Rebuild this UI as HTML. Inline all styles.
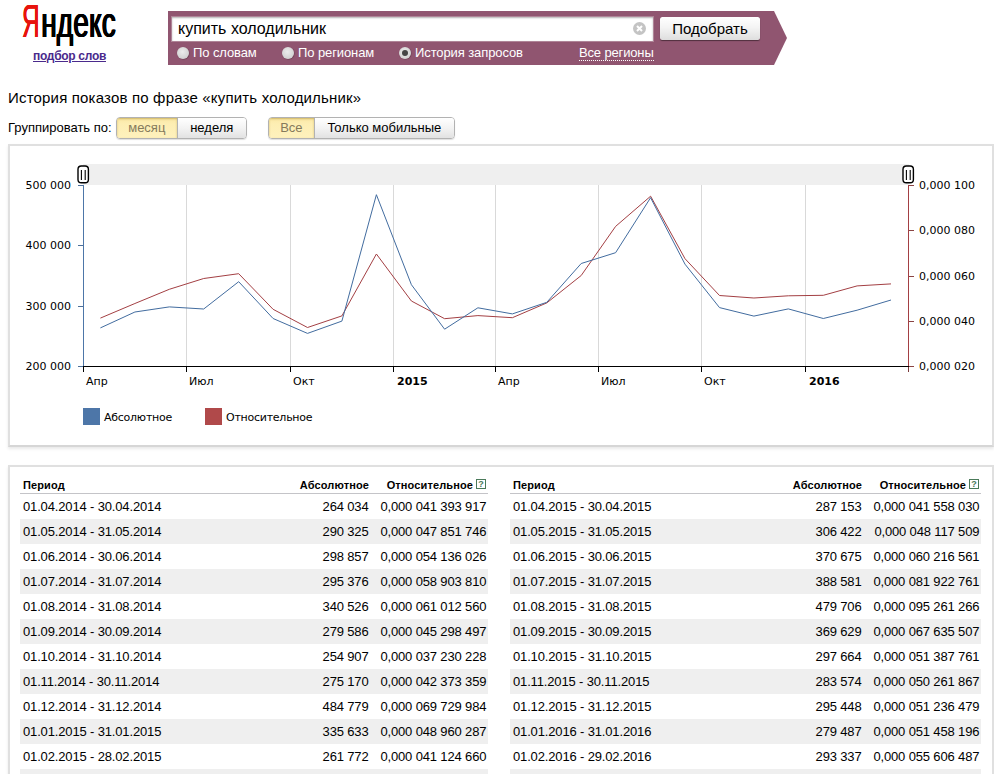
<!DOCTYPE html>
<html lang="ru">
<head>
<meta charset="utf-8">
<title>Яндекс — подбор слов</title>
<style>
html,body{margin:0;padding:0;background:#fff;}
body{width:994px;height:774px;overflow:hidden;position:relative;font-family:"Liberation Sans",Arial,sans-serif;color:#000;font-size:13px;}
.abs{position:absolute;}
.logo{left:22px;top:-3.5px;font-size:42px;line-height:52px;font-weight:normal;letter-spacing:.6px;transform:scaleX(.655);transform-origin:0 0;white-space:nowrap;color:#000;text-shadow:-1px 0 0,1px 0 0,-.5px 0 0,.5px 0 0;}
.logo i{font-style:normal;font-size:46.5px;line-height:40px;letter-spacing:0;color:#e8130c;display:inline-block;transform:scaleX(.80);transform-origin:0 0;margin-right:-4px;text-shadow:-.7px 0 0,.7px 0 0;}
.sub{left:33px;top:49px;font-size:12px;letter-spacing:-.3px;font-weight:bold;color:#4a2a8c;text-decoration:underline;white-space:nowrap;}
.bar{left:168px;top:11px;width:606px;height:54px;background:#905570;}
.arrow{left:774px;top:11px;width:0;height:0;border-left:13px solid #905570;border-top:27px solid transparent;border-bottom:27px solid transparent;}
.inp{left:172px;top:17px;width:481px;height:24px;background:#fff;box-shadow:inset 0 1px 2px rgba(0,0,0,.3),0 0 0 1px rgba(255,255,255,.28);box-sizing:border-box;}
.inp span{position:absolute;left:6px;top:3px;font-size:16px;line-height:18px;color:#000;}
.clr{left:633px;top:22px;width:13px;height:13px;}
.btn{left:660px;top:17px;width:100px;height:23px;border-radius:2.5px;background:linear-gradient(#fff,#f4f4f4 45%,#dedede);box-shadow:0 1px 1px rgba(0,0,0,.45);font-size:15px;line-height:23px;text-align:center;color:#000;}
.rad{top:45px;font-size:13px;line-height:15px;letter-spacing:-.1px;color:#fff;white-space:nowrap;}
.rad b{display:inline-block;width:12px;height:12px;border-radius:50%;background:radial-gradient(circle at 45% 40%,#ececec,#d2d2d2 70%,#bdbdbd);vertical-align:-2px;margin-right:4px;box-shadow:.5px .5px 1px rgba(0,0,0,.3);position:relative;}
.rad b.on:after{content:"";position:absolute;left:3px;top:3px;width:6px;height:6px;border-radius:50%;background:#444;}
.reg{left:579px;top:45px;font-size:13px;line-height:15px;letter-spacing:-.15px;color:#fff;border-bottom:1px dotted #fff;white-space:nowrap;}
.title{left:8px;top:89px;font-size:15px;line-height:18px;letter-spacing:.18px;white-space:nowrap;}
.grp{left:8px;top:120px;font-size:13px;line-height:15px;white-space:nowrap;}
.seg{top:117px;height:22px;border:1px solid #b2b2b2;border-radius:4px;box-sizing:border-box;display:flex;font-size:13px;line-height:20px;overflow:hidden;box-shadow:0 1px 1px rgba(0,0,0,.13);}
.seg span{display:block;text-align:center;background:linear-gradient(#fff,#f3f3f3 50%,#e2e2e2);color:#000;box-sizing:border-box;}
.seg span.on{background:linear-gradient(#fbe8a4,#fdeeb3 30%,#fef1bd);color:#857a5c;border-right:1px solid #b2b2b2;box-shadow:inset 0 1px 2px rgba(150,120,20,.45);}
.box{border:2px solid #e0e0e0;border-bottom-color:#d6d6d6;box-sizing:border-box;background:#fff;box-shadow:0 2px 3px rgba(0,0,0,.09);}
.chartbox{left:8px;top:144px;width:986px;height:303px;}
.chart{position:absolute;left:8px;top:145px;}
.ct{font-family:"DejaVu Sans",Verdana,sans-serif;font-size:11px;fill:#000;}
.ct.b{font-weight:bold;}
.ct.lg{letter-spacing:-.25px;}
.tablebox{left:8px;top:465px;width:986px;height:330px;}
.t{position:absolute;top:477px;border-collapse:separate;border-spacing:0;font-size:13px;table-layout:fixed;}
.t th,.t td{box-sizing:border-box;overflow:visible;}
.t th{font-size:11px;font-weight:bold;height:17px;padding:0;border-bottom:1px solid #c4c4c8;white-space:nowrap;vertical-align:middle;letter-spacing:.12px;}
.t td{height:25px;padding:0;white-space:nowrap;vertical-align:middle;letter-spacing:-.15px;}
.t .p{text-align:left;padding-left:3px;}
.t .a,.t .r{text-align:right;}
.t td.a{padding-right:.5px}
.t td.r{padding-right:1.7px}
.t th.r{padding-right:2px}
.t tr.o td{background:#efefef;}
.q{display:inline-block;box-sizing:border-box;width:10px;height:10px;border:1px solid #4a7a5a;color:#4a7a5a;font-size:9px;line-height:8px;text-align:center;font-weight:bold;margin-left:3px;vertical-align:middle;position:relative;top:-2px;letter-spacing:0;}
#t1{left:20px;width:468px;}
#t2{left:510px;width:471px;}
#t1 .p{width:229px}#t1 .a{width:120px}#t1 .r{width:119px}
#t2 .p{width:232px}#t2 .a{width:120px}#t2 .r{width:119px}
</style>
</head>
<body>
<div class="abs logo"><i>Я</i>ндекс</div>
<div class="abs sub">подбор слов</div>
<div class="abs bar"></div>
<div class="abs arrow"></div>
<div class="abs inp"><span>купить холодильник</span></div>
<svg class="abs clr" viewBox="0 0 13 13"><circle cx="6.5" cy="6.5" r="6.5" fill="#c4c4c4"/><path d="M4 4l5 5M9 4l-5 5" stroke="#fff" stroke-width="2" fill="none"/></svg>
<div class="abs btn">Подобрать</div>
<div class="abs rad" style="left:177px"><b></b>По словам</div>
<div class="abs rad" style="left:282px"><b></b>По регионам</div>
<div class="abs rad" style="left:399px"><b class="on"></b>История запросов</div>
<div class="abs reg">Все регионы</div>
<div class="abs title">История показов по фразе «купить холодильник»</div>
<div class="abs grp">Группировать по:</div>
<div class="abs seg" style="left:116px;width:131px"><span class="on" style="width:61px">месяц</span><span style="width:69px">неделя</span></div>
<div class="abs seg" style="left:268px;width:187px"><span class="on" style="width:46px">Все</span><span style="width:140px">Только мобильные</span></div>
<div class="abs box chartbox"></div>
<svg class="chart" width="984" height="300" viewBox="8 145 984 300">
<rect x="83" y="164" width="826" height="21" fill="#efefef"/>
<line x1="186.5" y1="185" x2="186.5" y2="366" stroke="#d9d9d9" stroke-width="1"/>
<line x1="290.5" y1="185" x2="290.5" y2="366" stroke="#d9d9d9" stroke-width="1"/>
<line x1="393.5" y1="185" x2="393.5" y2="366" stroke="#d9d9d9" stroke-width="1"/>
<line x1="495.5" y1="185" x2="495.5" y2="366" stroke="#d9d9d9" stroke-width="1"/>
<line x1="598.5" y1="185" x2="598.5" y2="366" stroke="#d9d9d9" stroke-width="1"/>
<line x1="701.5" y1="185" x2="701.5" y2="366" stroke="#d9d9d9" stroke-width="1"/>
<line x1="805.5" y1="185" x2="805.5" y2="366" stroke="#d9d9d9" stroke-width="1"/>
<polyline points="100.4,318.1 134.9,303.5 169.3,289.3 203.7,278.5 238.7,273.7 273.1,309.3 307.5,327.5 341.9,315.9 376.4,254.0 411.4,301.0 444.6,318.7 477.9,315.6 512.4,317.7 546.8,302.9 581.2,275.5 615.6,226.4 650.6,196.2 685.0,258.7 719.5,295.5 753.9,298.0 788.3,295.8 823.3,295.3 857.1,285.9 891.0,283.9" fill="none" stroke="#a33f43" stroke-width="1" stroke-linejoin="round"/>
<polyline points="100.4,327.9 134.9,312.0 169.3,306.9 203.7,309.0 238.7,281.7 273.1,318.5 307.5,333.4 341.9,321.1 376.4,194.7 411.4,284.7 444.6,329.2 477.9,307.8 512.4,313.9 546.8,302.3 581.2,263.5 615.6,252.7 650.6,197.7 685.0,264.2 719.5,307.6 753.9,316.1 788.3,308.9 823.3,318.5 857.1,310.2 891.0,300.0" fill="none" stroke="#426c9f" stroke-width="1" stroke-linejoin="round"/>
<line x1="83.5" y1="185" x2="83.5" y2="367" stroke="#4d76a8" stroke-width="1"/>
<line x1="908.5" y1="185" x2="908.5" y2="367" stroke="#a33f43" stroke-width="1"/>
<line x1="83" y1="366.5" x2="909" y2="366.5" stroke="#000" stroke-width="1"/>
<line x1="908.5" y1="367" x2="908.5" y2="372" stroke="#7a3a3a"/>
<line x1="78" y1="185.5" x2="83" y2="185.5" stroke="#4d6f9a"/>
<text x="71" y="189.0" text-anchor="end" class="ct">500 000</text>
<line x1="78" y1="245.5" x2="83" y2="245.5" stroke="#4d6f9a"/>
<text x="71" y="249.0" text-anchor="end" class="ct">400 000</text>
<line x1="78" y1="306.5" x2="83" y2="306.5" stroke="#4d6f9a"/>
<text x="71" y="310.0" text-anchor="end" class="ct">300 000</text>
<line x1="78" y1="366.5" x2="83" y2="366.5" stroke="#4d6f9a"/>
<text x="71" y="370.0" text-anchor="end" class="ct">200 000</text>
<line x1="909" y1="185.5" x2="914" y2="185.5" stroke="#8a4444"/>
<text x="919" y="189.0" class="ct">0,000 100</text>
<line x1="909" y1="230.5" x2="914" y2="230.5" stroke="#8a4444"/>
<text x="919" y="234.0" class="ct">0,000 080</text>
<line x1="909" y1="276.5" x2="914" y2="276.5" stroke="#8a4444"/>
<text x="919" y="280.0" class="ct">0,000 060</text>
<line x1="909" y1="321.5" x2="914" y2="321.5" stroke="#8a4444"/>
<text x="919" y="325.0" class="ct">0,000 040</text>
<line x1="909" y1="366.5" x2="914" y2="366.5" stroke="#8a4444"/>
<text x="919" y="370.0" class="ct">0,000 020</text>
<line x1="83.5" y1="367" x2="83.5" y2="372" stroke="#000"/>
<text x="86.0" y="385" class="ct">Апр</text>
<line x1="186.5" y1="367" x2="186.5" y2="372" stroke="#000"/>
<text x="189.0" y="385" class="ct">Июл</text>
<line x1="290.5" y1="367" x2="290.5" y2="372" stroke="#000"/>
<text x="293.0" y="385" class="ct">Окт</text>
<line x1="393.5" y1="367" x2="393.5" y2="372" stroke="#000"/>
<text x="397.0" y="385" class="ct b">2015</text>
<line x1="495.5" y1="367" x2="495.5" y2="372" stroke="#000"/>
<text x="498.0" y="385" class="ct">Апр</text>
<line x1="598.5" y1="367" x2="598.5" y2="372" stroke="#000"/>
<text x="601.0" y="385" class="ct">Июл</text>
<line x1="701.5" y1="367" x2="701.5" y2="372" stroke="#000"/>
<text x="704.0" y="385" class="ct">Окт</text>
<line x1="805.5" y1="367" x2="805.5" y2="372" stroke="#000"/>
<text x="809.0" y="385" class="ct b">2016</text>
<rect x="78.0" y="166" width="10.4" height="16.8" rx="3.3" ry="3.3" fill="#fff" stroke="#000" stroke-width="1.4"/>
<line x1="81.4" y1="170" x2="81.4" y2="180" stroke="#000" stroke-width="1.1"/>
<line x1="85.2" y1="170" x2="85.2" y2="180" stroke="#000" stroke-width="1.1"/>
<rect x="903.0" y="166" width="10.4" height="16.8" rx="3.3" ry="3.3" fill="#fff" stroke="#000" stroke-width="1.4"/>
<line x1="906.4" y1="170" x2="906.4" y2="180" stroke="#000" stroke-width="1.1"/>
<line x1="910.2" y1="170" x2="910.2" y2="180" stroke="#000" stroke-width="1.1"/>
<rect x="83" y="408" width="17" height="17" fill="#4d76a8"/>
<text x="104" y="421" class="ct lg">Абсолютное</text>
<rect x="205" y="408" width="17" height="17" fill="#b0494a"/>
<text x="226" y="421" class="ct lg">Относительное</text>
</svg>
<div class="abs box tablebox"></div>
<div class="abs t-wrap" style="left:0;top:0"><div id="t1w"><table class="t" id="t1"><tr class="h"><th class="p">Период</th><th class="a">Абсолютное</th><th class="r">Относительное<span class="q">?</span></th></tr>
<tr class="e"><td class="p">01.04.2014 - 30.04.2014</td><td class="a">264 034</td><td class="r">0,000 041 393 917</td></tr>
<tr class="o"><td class="p">01.05.2014 - 31.05.2014</td><td class="a">290 325</td><td class="r">0,000 047 851 746</td></tr>
<tr class="e"><td class="p">01.06.2014 - 30.06.2014</td><td class="a">298 857</td><td class="r">0,000 054 136 026</td></tr>
<tr class="o"><td class="p">01.07.2014 - 31.07.2014</td><td class="a">295 376</td><td class="r">0,000 058 903 810</td></tr>
<tr class="e"><td class="p">01.08.2014 - 31.08.2014</td><td class="a">340 526</td><td class="r">0,000 061 012 560</td></tr>
<tr class="o"><td class="p">01.09.2014 - 30.09.2014</td><td class="a">279 586</td><td class="r">0,000 045 298 497</td></tr>
<tr class="e"><td class="p">01.10.2014 - 31.10.2014</td><td class="a">254 907</td><td class="r">0,000 037 230 228</td></tr>
<tr class="o"><td class="p">01.11.2014 - 30.11.2014</td><td class="a">275 170</td><td class="r">0,000 042 373 359</td></tr>
<tr class="e"><td class="p">01.12.2014 - 31.12.2014</td><td class="a">484 779</td><td class="r">0,000 069 729 984</td></tr>
<tr class="o"><td class="p">01.01.2015 - 31.01.2015</td><td class="a">335 633</td><td class="r">0,000 048 960 287</td></tr>
<tr class="e"><td class="p">01.02.2015 - 28.02.2015</td><td class="a">261 772</td><td class="r">0,000 041 124 660</td></tr>
<tr class="o"><td class="p">01.03.2015 - 31.03.2015</td><td class="a">297 304</td><td class="r">0,000 042 512 338</td></tr>
</table></div><div id="t2w"><table class="t" id="t2"><tr class="h"><th class="p">Период</th><th class="a">Абсолютное</th><th class="r">Относительное<span class="q">?</span></th></tr>
<tr class="e"><td class="p">01.04.2015 - 30.04.2015</td><td class="a">287 153</td><td class="r">0,000 041 558 030</td></tr>
<tr class="o"><td class="p">01.05.2015 - 31.05.2015</td><td class="a">306 422</td><td class="r">0,000 048 117 509</td></tr>
<tr class="e"><td class="p">01.06.2015 - 30.06.2015</td><td class="a">370 675</td><td class="r">0,000 060 216 561</td></tr>
<tr class="o"><td class="p">01.07.2015 - 31.07.2015</td><td class="a">388 581</td><td class="r">0,000 081 922 761</td></tr>
<tr class="e"><td class="p">01.08.2015 - 31.08.2015</td><td class="a">479 706</td><td class="r">0,000 095 261 266</td></tr>
<tr class="o"><td class="p">01.09.2015 - 30.09.2015</td><td class="a">369 629</td><td class="r">0,000 067 635 507</td></tr>
<tr class="e"><td class="p">01.10.2015 - 31.10.2015</td><td class="a">297 664</td><td class="r">0,000 051 387 761</td></tr>
<tr class="o"><td class="p">01.11.2015 - 30.11.2015</td><td class="a">283 574</td><td class="r">0,000 050 261 867</td></tr>
<tr class="e"><td class="p">01.12.2015 - 31.12.2015</td><td class="a">295 448</td><td class="r">0,000 051 236 479</td></tr>
<tr class="o"><td class="p">01.01.2016 - 31.01.2016</td><td class="a">279 487</td><td class="r">0,000 051 458 196</td></tr>
<tr class="e"><td class="p">01.02.2016 - 29.02.2016</td><td class="a">293 337</td><td class="r">0,000 055 606 487</td></tr>
<tr class="o"><td class="p">01.03.2016 - 31.03.2016</td><td class="a">310 218</td><td class="r">0,000 056 492 115</td></tr>
</table></div></div>
</body>
</html>
